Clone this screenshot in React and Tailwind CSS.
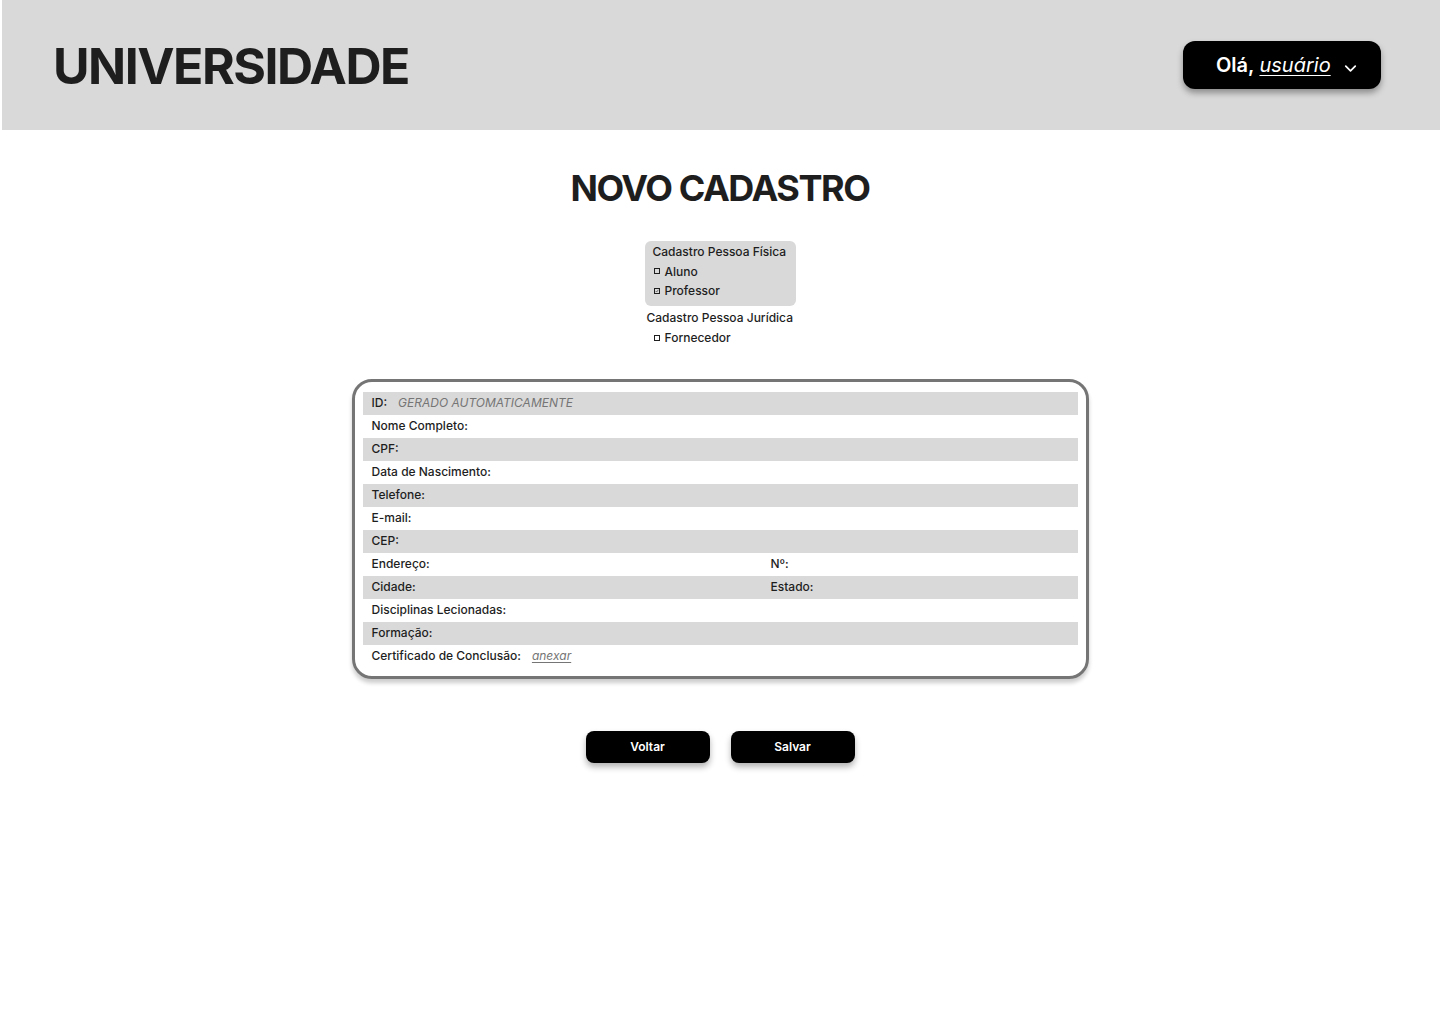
import { ChevronDown } from "lucide-react";

const rows = [
  { label: "ID:", extra: "GERADO AUTOMATICAMENTE" },
  { label: "Nome Completo:" },
  { label: "CPF:" },
  { label: "Data de Nascimento:" },
  { label: "Telefone:" },
  { label: "E-mail:" },
  { label: "CEP:" },
  { label: "Endereço:", second: "Nº:" },
  { label: "Cidade:", second: "Estado:" },
  { label: "Disciplinas Lecionadas:" },
  { label: "Formação:" },
  { label: "Certificado de Conclusão:", link: "anexar" },
];

export default function App() {
  return (
    <div className="min-h-screen bg-white text-[#1e1e1e]" style={{ fontFamily: "Inter, 'Noto Sans', sans-serif" }}>
      <header className="ml-[2px] h-[130px] bg-[#d9d9d9] flex items-center justify-between pl-[51px] pr-[59px]">
        <h1 className="text-[50px] font-bold tracking-[-0.03em] leading-none text-[#1e1e1e] mt-[1px]">UNIVERSIDADE</h1>
        <button className="w-[198px] h-[48px] bg-black rounded-[12px] flex items-center justify-start pl-[33px] gap-[2px] text-white shadow-[0_4px_6px_rgba(0,0,0,0.35)]">
          <span className="text-[20px] font-semibold">Olá,</span>
          <span className="text-[20px] italic underline underline-offset-[3px] decoration-1 ml-[3px]">usuário</span>
          <ChevronDown size={19} strokeWidth={2.2} className="ml-[8px] mt-[6px]" />
        </button>
      </header>

      <main className="flex flex-col items-center">
        <h2 className="mt-[36px] text-[36px] font-bold tracking-[-0.04em] leading-[44px]">NOVO CADASTRO</h2>

        <div className="mt-[31px] flex flex-col items-center text-[12px] font-medium leading-[19.5px] whitespace-nowrap">
          <div className="w-[151px] bg-[#d9d9d9] rounded-[6px] px-[8px] pt-[1px] pb-[5px]">
            <div>Cadastro Pessoa Física</div>
            <div className="flex items-center gap-[5px]"><span className="w-[6px] h-[6px] border border-[#1e1e1e] inline-block ml-[1px]" />Aluno</div>
            <div className="flex items-center gap-[5px]">
              <span className="w-[6px] h-[6px] border border-[#1e1e1e] inline-flex items-center justify-center ml-[1px]">
                <svg viewBox="0 0 6 6" className="w-[6px] h-[6px]"><path d="M1 3 L2.5 4.5 L5 1.2" fill="none" stroke="#1e1e1e" strokeWidth="0.8" /></svg>
              </span>
              Professor
            </div>
          </div>
          <div className="w-[151px] mt-[2px] pl-[2px]">Cadastro Pessoa Jurídica</div>
          <div className="w-[151px] pl-[9px] flex items-center gap-[5px] mt-[1px]"><span className="w-[6px] h-[6px] border border-[#1e1e1e] inline-block" />Fornecedor</div>
        </div>

        <div className="mt-[31px] w-[737px] border-[3px] border-[#757575] rounded-[20px] px-[8px] pt-[10px] pb-[8px] shadow-[0_4px_4px_rgba(0,0,0,0.2)]">
          {rows.map((r, i) => (
            <div key={i} className={`h-[23px] flex items-center px-[9px] text-[12px] font-medium ${i % 2 === 0 ? "bg-[#d9d9d9]" : ""}`}>
              <span className="w-[399px] flex items-center">
                <span>{r.label}</span>
                {r.extra && <span className="ml-[11px] italic font-normal text-[#757575]">{r.extra}</span>}
                {r.link && <span className="ml-[11px] italic font-normal text-[#757575] underline underline-offset-2">{r.link}</span>}
              </span>
              {r.second && <span>{r.second}</span>}
            </div>
          ))}
        </div>

        <div className="mt-[52px] flex gap-[21px]">
          <button className="w-[124px] h-[32px] bg-black rounded-[8px] text-white text-[12px] font-semibold shadow-[0_4px_6px_rgba(0,0,0,0.3)]">Voltar</button>
          <button className="w-[124px] h-[32px] bg-black rounded-[8px] text-white text-[12px] font-semibold shadow-[0_4px_6px_rgba(0,0,0,0.3)]">Salvar</button>
        </div>
      </main>
    </div>
  );
}
